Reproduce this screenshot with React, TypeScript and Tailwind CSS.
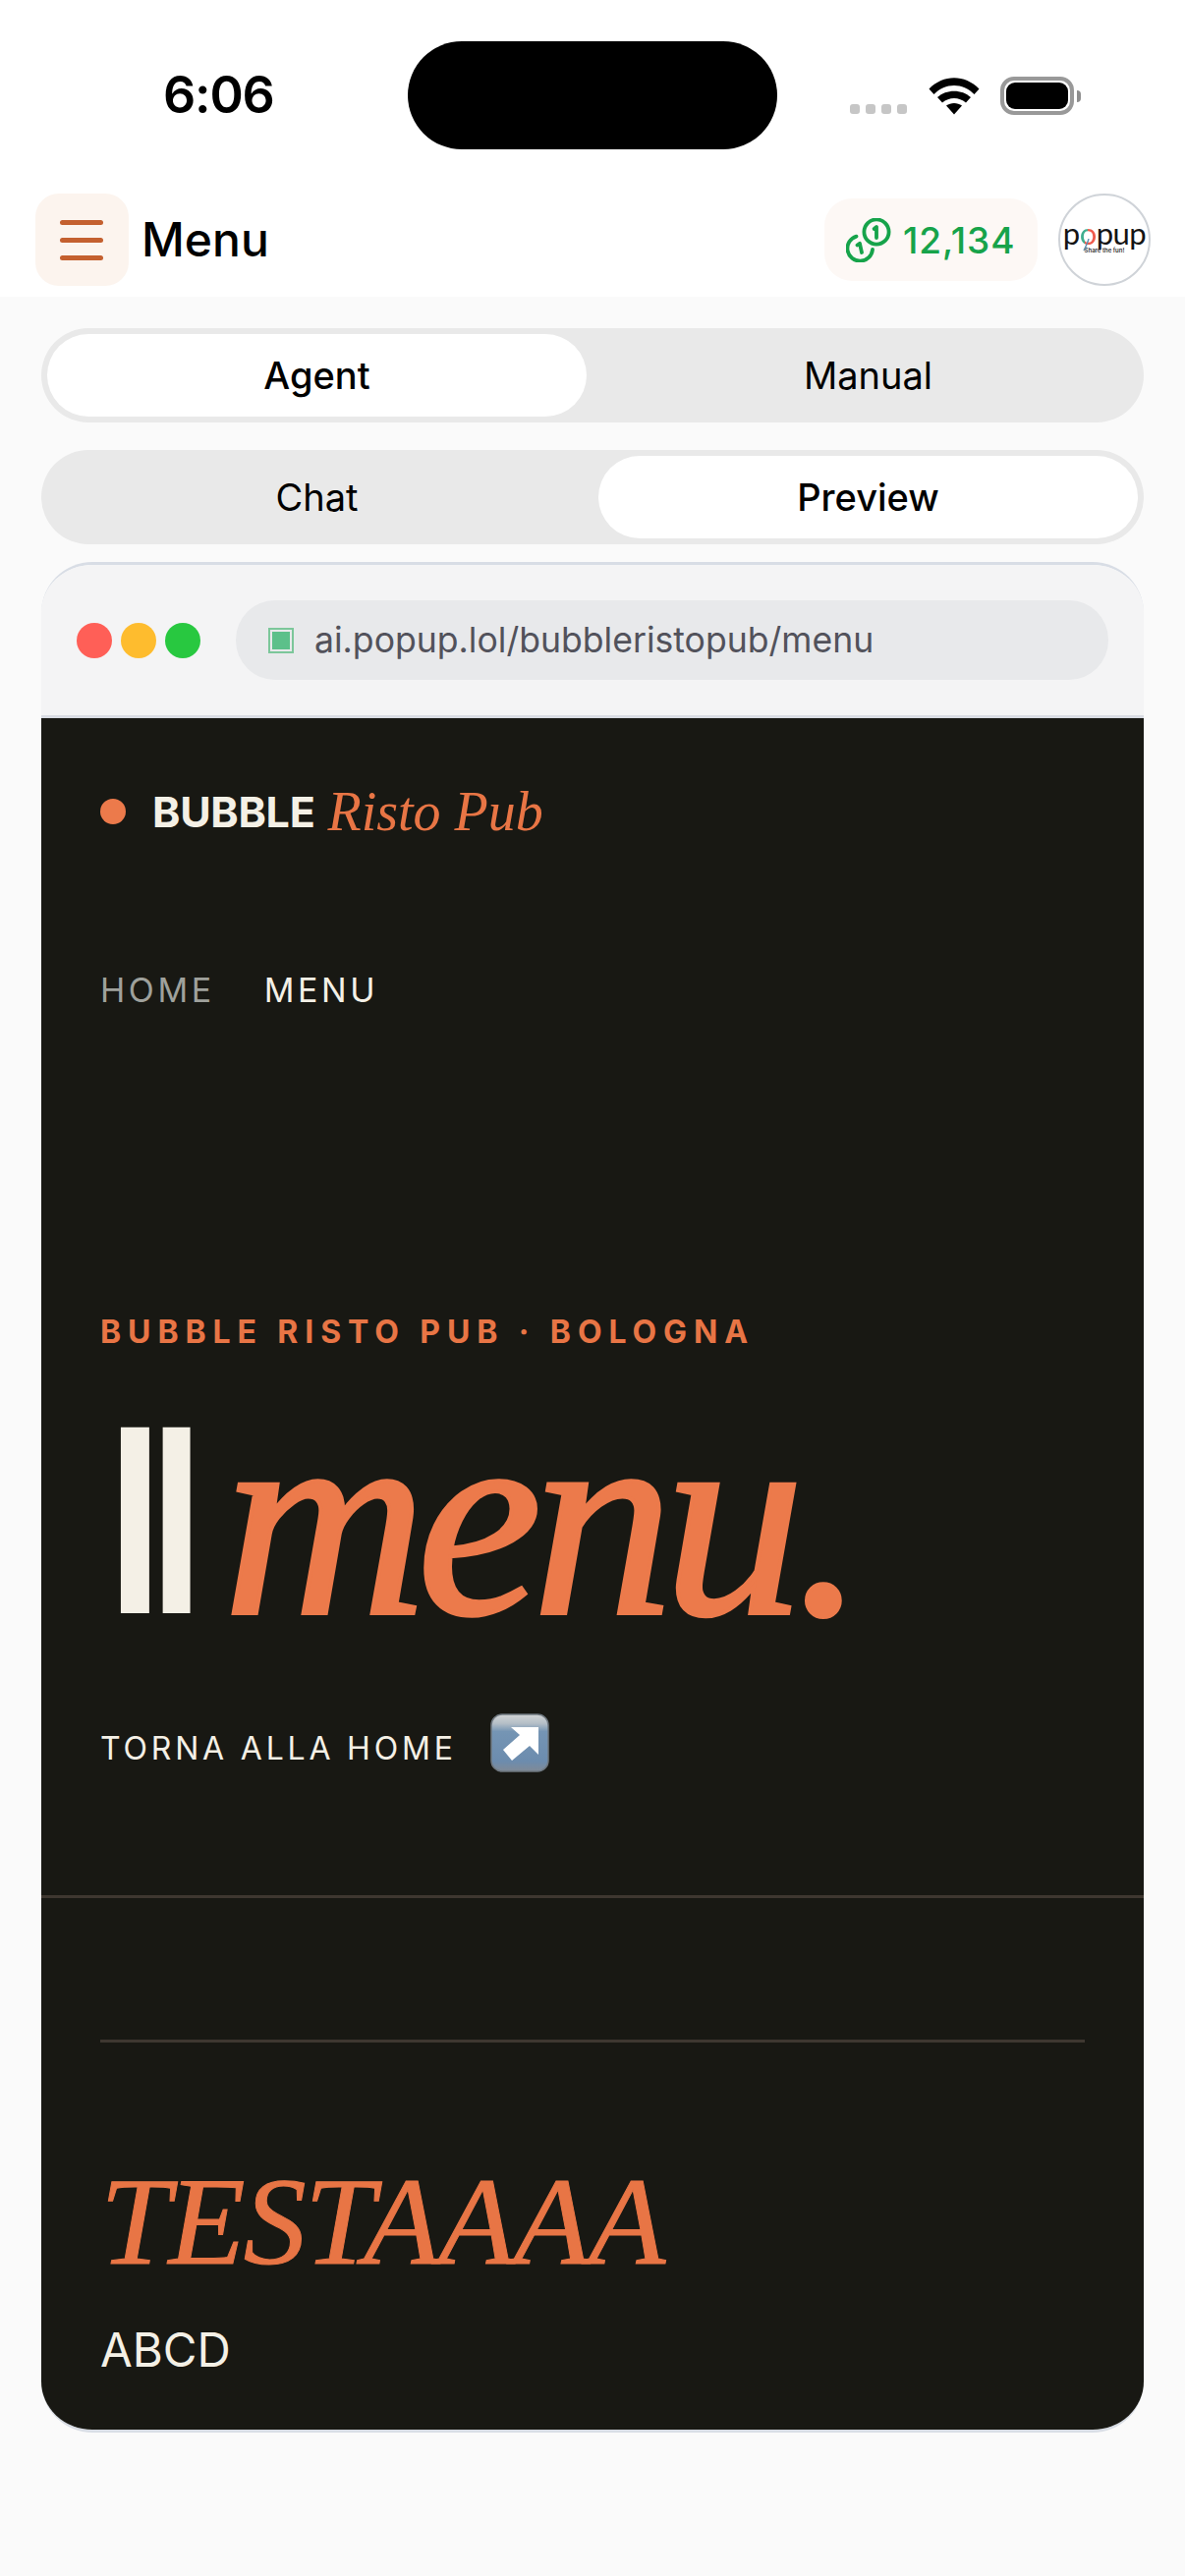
import React from "react";

const inter = "font-['Inter',sans-serif]";
const serif = "font-['Liberation_Serif',serif]";

function Segmented({ left, right, active }: { left: string; right: string; active: "left" | "right" }) {
  const on = "bg-white font-medium rounded-[42px]";
  const off = "font-normal";
  return (
    <div className="grid grid-cols-2 gap-[12px] p-[6px] h-[96px] rounded-[48px] bg-[#e9e9e9]">
      <div className={`flex items-center justify-center text-[38px] text-black ${active === "left" ? on : off}`}>{left}</div>
      <div className={`flex items-center justify-center text-[38px] text-black ${active === "right" ? on : off}`}>{right}</div>
    </div>
  );
}

function Wifi() {
  return (
    <svg width="52" height="38" viewBox="0 0 52 38">
      <path d="M0.5 11.5 C15 -3.5 37 -3.5 51.5 11.5 L46.5 17 C35 5 17 5 5.5 17 Z" fill="#000" />
      <path d="M9 20 C18 11.5 34 11.5 43 20 L38 25.5 C31 19.5 21 19.5 14 25.5 Z" fill="#000" />
      <path d="M18 28.5 C22.5 25 29.5 25 34 28.5 L26 37.5 Z" fill="#000" />
    </svg>
  );
}

function Battery() {
  return (
    <div className="flex items-center gap-[3px]">
      <div className="w-[75px] h-[39px] rounded-[14px] border-[4px] border-[#999999] p-[2px]">
        <div className="w-full h-full rounded-[9px] bg-black" />
      </div>
      <div className="w-[4px] h-[12px] rounded-r-[4px] bg-[#8e8e8e]" />
    </div>
  );
}

function Coins() {
  return (
    <svg width="46" height="45" viewBox="0 0 46 45" fill="none" stroke="#16a34a" strokeWidth="3.8" strokeLinecap="round" strokeLinejoin="round">
      <circle cx="31" cy="14" r="12.6" />
      <path d="M28.6 11 L31 9 V20" />
      <path d="M10.5 18.6 A12.8 12.8 0 1 0 27 32" />
      <path d="M11.5 27.5 L14 25.8 L16 35" />
    </svg>
  );
}

function Balloon() {
  return (
    <svg width="8" height="13" viewBox="0 0 8 13" fill="none" className="absolute left-[23px] top-[44px]">
      <path d="M6 0 C5 4 4 6 1 12" stroke="#5b8fb0" strokeWidth="1.4" />
    </svg>
  );
}

function ArrowEmoji() {
  return (
    <svg width="60" height="60" viewBox="0 0 60 60" className="ml-[34px]">
      <defs>
        <linearGradient id="emoji" x1="0" y1="0" x2="0" y2="1">
          <stop offset="0" stopColor="#d3d5d6" />
          <stop offset="0.16" stopColor="#b4bec7" />
          <stop offset="0.3" stopColor="#7595b4" />
          <stop offset="0.82" stopColor="#6c8cae" />
          <stop offset="1" stopColor="#808a96" />
        </linearGradient>
      </defs>
      <rect x="1" y="1" width="58" height="58" rx="11" fill="url(#emoji)" stroke="#6f7880" strokeWidth="1.5" />
      <path d="M21 14 H49 V42 L40 33 L22 48 L13 37 L30 22 Z" fill="#ffffff" />
    </svg>
  );
}

export default function App() {
  return (
    <div className={`w-[1206px] h-[2622px] bg-[#fafafa] ${inter} text-black overflow-hidden`}>
      <div className="bg-white h-[302px] flex flex-col">
        <div className="h-[197px] flex pt-[42px]">
          <div className="w-[415px] h-[110px] flex items-center pl-[166px]">
            <span className="text-[52px] font-semibold leading-none tracking-[-1.2px]">6:06</span>
          </div>
          <div className="w-[376px] h-[110px] rounded-[55px] bg-black" />
          <div className="flex items-start pl-[74px] pt-[36px]">
            <div className="flex gap-[6px] mt-[28px]">
              <div className="w-[10px] h-[10px] rounded-[3px] bg-[#c6c6c6]" />
              <div className="w-[10px] h-[10px] rounded-[3px] bg-[#c6c6c6]" />
              <div className="w-[10px] h-[10px] rounded-[3px] bg-[#c6c6c6]" />
              <div className="w-[10px] h-[10px] rounded-[3px] bg-[#c6c6c6]" />
            </div>
            <div className="ml-[22px] mt-[1px]"><Wifi /></div>
            <div className="ml-[21px]"><Battery /></div>
          </div>
        </div>
        <div className="flex items-center pl-[36px] pr-[35px] h-[94px]">
          <div className="w-[95px] h-[94px] rounded-[24px] bg-[#fcf4ee] flex flex-col items-center justify-center gap-[13px] pr-[2px]">
            <div className="w-[44px] h-[5px] rounded-full bg-[#c4602f]" />
            <div className="w-[44px] h-[5px] rounded-full bg-[#c4602f]" />
            <div className="w-[44px] h-[5px] rounded-full bg-[#c4602f]" />
          </div>
          <span className="ml-[13px] text-[48px] font-[550] leading-none">Menu</span>
          <div className="ml-auto h-[84px] w-[217px] rounded-[28px] bg-[#fdf8f5] flex items-center pl-[22px]">
            <Coins />
            <span className="ml-[12px] text-[37px] font-medium text-[#16a34a] leading-none tracking-[0.9px]">12,134</span>
          </div>
          <div className="relative ml-[21px] w-[94px] h-[94px] rounded-full border-[2px] border-[#cfd3d8] bg-white flex flex-col items-center justify-center pb-[4px]">
            <span className="text-[31px] leading-[24px] font-normal text-[#141414] tracking-[-0.5px] font-['Lato',sans-serif]">
              p<span className="bg-[conic-gradient(#ef5b4c_0deg,#ef5b4c_200deg,#3fae8f_200deg,#3fae8f_360deg)] bg-clip-text text-transparent">o</span>pup
            </span>
            <span className="text-[6px] leading-[8px] mt-[2px] text-[#333] font-semibold">Share the fun!</span>
            <Balloon />
          </div>
        </div>
      </div>

      <div className="px-[42px] pt-[32px] flex flex-col">
        <Segmented left="Agent" right="Manual" active="left" />
        <div className="h-[28px]" />
        <Segmented left="Chat" right="Preview" active="right" />

        <div className="mt-[18px] h-[1904px] rounded-[52px] border-t-[3px] border-b-[3px] border-[#d8dde5] overflow-hidden flex flex-col">
          <div className="h-[156px] shrink-0 bg-[#f4f4f5] border-b-[3px] border-[#d9dce3] flex items-center pl-[36px] pr-[36px]">
            <div className="w-[36px] h-[36px] rounded-full bg-[#ff5f57]" />
            <div className="w-[36px] h-[36px] rounded-full bg-[#febc2e] ml-[9px]" />
            <div className="w-[36px] h-[36px] rounded-full bg-[#28c840] ml-[9px]" />
            <div className="ml-[36px] flex-1 h-[81px] rounded-[40px] bg-[#e8e9eb] flex items-center pl-[33px]">
              <div className="w-[26px] h-[26px] border-[2px] border-[#7cc79a] p-[2px]">
                <div className="w-full h-full bg-[#5cc08a]" />
              </div>
              <span className="ml-[21px] text-[35.6px] leading-none text-[#52525b]">ai.popup.lol/bubbleristopub/menu</span>
            </div>
          </div>

          <div className="flex-1 bg-[#181813] flex flex-col">
            <div className="px-[60px] pt-[70px] flex flex-col">
              <div className="flex items-center h-[50px]">
                <div className="w-[26px] h-[26px] rounded-full bg-[#ec7a4b]" />
                <span className="ml-[27px] text-[43px] font-bold text-[#f4f0e6] tracking-[-0.3px] leading-none">BUBBLE</span>
                <span className={`ml-[13px] ${serif} italic text-[56px] text-[#e87545] leading-none`}>Risto Pub</span>
              </div>
              <div className="flex mt-[140px] text-[34px] tracking-[0.105em] leading-none">
                <span className="text-[#9fa19c]">HOME</span>
                <span className="ml-[50px] text-[#f4f0e6]">MENU</span>
              </div>
            </div>
            <div className="px-[60px] mt-[315px] flex flex-col">
              <div className="text-[32px] font-bold text-[#e87545] tracking-[6.9px] leading-none">BUBBLE RISTO PUB · BOLOGNA</div>
              <div className="flex items-baseline mt-[54px] h-[240px] leading-none">
                <span className="text-[260px] font-[450] text-[#f4f0e6] tracking-[-0.1em] leading-[240px]">Il</span>
                <span className={`${serif} italic text-[286px] text-[#ec7a4b] tracking-[-0.033em] leading-[240px] ml-[41px] [-webkit-text-stroke:4px_#ec7a4b]`}>menu.</span>
              </div>
              <div className="flex items-center mt-[78px]">
                <span className="text-[32px] text-[#f4f0e6] tracking-[3.8px] leading-none mt-[11px]">TORNA ALLA HOME</span>
                <ArrowEmoji />
              </div>
            </div>
            <div className="mt-[125px] h-[3px] bg-[#3e3730]" />
            <div className="px-[60px] pt-[144px] flex flex-col">
              <div className="h-[3px] bg-[#3e3730]" />
              <div className={`mt-[118px] ${serif} italic text-[128px] leading-none text-[#e87545] tracking-[-0.014em] [-webkit-text-stroke:1px_#e87545]`}>TESTAAAA</div>
              <div className="mt-[43px] text-[47.5px] leading-none text-[#f4f0e6]">ABCD</div>
            </div>
          </div>
        </div>
      </div>
    </div>
  );
}
